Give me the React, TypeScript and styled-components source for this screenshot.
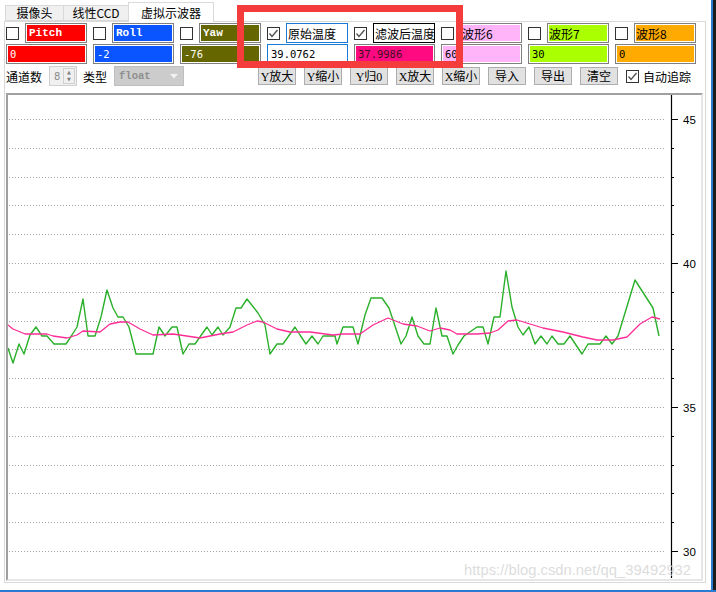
import React from 'react';
import styled, { createGlobalStyle } from 'styled-components';

const GlobalStyle = createGlobalStyle`
  html, body {
    margin: 0;
    padding: 0;
    background: #fff;
  }
  body {
    font-family: 'Noto Sans CJK SC', 'Liberation Sans', sans-serif;
    color: #000;
  }
`;

type Channel = {
  label: string;
  value: string;
  checked?: boolean;
  labelBg: string;
  labelColor: string;
  labelBorder?: string;
  valueBg: string;
  valueColor: string;
  valueBorder?: string;
  latin?: boolean;
};

const channels: Channel[] = [
  { label: 'Pitch', value: '0', labelBg: '#ff0000', labelColor: '#fff', valueBg: '#ff0000', valueColor: '#fff', latin: true },
  { label: 'Roll', value: '-2', labelBg: '#0a55ff', labelColor: '#fff', valueBg: '#0a55ff', valueColor: '#fff', latin: true },
  { label: 'Yaw', value: '-76', labelBg: '#666600', labelColor: '#fff', valueBg: '#666600', valueColor: '#fff', latin: true },
  {
    label: '原始温度',
    value: '39.0762',
    checked: true,
    labelBg: '#fff',
    labelColor: '#000',
    labelBorder: '#1a7bd6',
    valueBg: '#fff',
    valueColor: '#000',
    valueBorder: '#1a7bd6',
  },
  {
    label: '滤波后温度',
    value: '37.9986',
    checked: true,
    labelBg: '#fff',
    labelColor: '#000',
    labelBorder: '#000',
    valueBg: '#ff0a80',
    valueColor: '#3a1020',
  },
  { label: '波形6', value: '60', labelBg: '#ffb4fa', labelColor: '#000', valueBg: '#ffb4fa', valueColor: '#000' },
  { label: '波形7', value: '30', labelBg: '#aaff00', labelColor: '#000', valueBg: '#aaff00', valueColor: '#000' },
  { label: '波形8', value: '0', labelBg: '#ffaa00', labelColor: '#000', valueBg: '#ffaa00', valueColor: '#000' },
];

const buttons = ['Y放大', 'Y缩小', 'Y归0', 'X放大', 'X缩小', '导入', '导出', '清空'];

// screen coordinates traced from the capture
const rawPts = [
  [8, 348], [13, 363], [19, 344], [24, 354], [30, 335], [36, 327], [42, 336], [47, 336], [54, 344], [66, 344],
  [72, 335], [77, 327], [83, 299], [88, 336], [95, 336], [101, 317], [107, 290], [113, 308], [118, 317], [123, 317],
  [129, 327], [136, 354], [153, 354], [159, 327], [165, 336], [172, 327], [177, 327], [183, 354], [189, 344], [195, 344],
  [207, 327], [212, 335], [218, 327], [223, 335], [230, 327], [236, 308], [241, 308], [247, 299], [258, 313], [265, 325],
  [270, 354], [277, 344], [283, 344], [295, 327], [300, 335], [306, 344], [312, 336], [318, 344], [323, 336], [335, 336],
  [337, 344], [343, 327], [353, 327], [358, 344], [365, 315], [371, 298], [382, 298], [389, 308], [401, 344], [406, 336],
  [412, 317], [418, 336], [424, 344], [430, 344], [436, 308], [442, 336], [447, 336], [453, 354], [458, 345], [464, 336],
  [477, 327], [483, 327], [488, 344], [494, 317], [500, 317], [506, 271], [512, 307], [518, 327], [523, 335], [529, 327],
  [535, 344], [541, 336], [547, 344], [552, 336], [558, 344], [564, 344], [570, 336], [582, 354], [588, 344], [600, 344],
  [606, 336], [612, 344], [618, 336], [635, 280], [653, 308], [659, 336],
];

const filteredPts = [
  [8, 325], [13, 329], [18, 331], [25, 334], [47, 334], [53, 336], [67, 338], [77, 335], [83, 331], [100, 332],
  [110, 324], [120, 322], [128, 322], [140, 329], [153, 335], [173, 334], [180, 335], [200, 338], [220, 334], [233, 332],
  [247, 325], [257, 321], [263, 322], [277, 329], [290, 332], [310, 332], [333, 335], [343, 334], [360, 334], [373, 325],
  [388, 318], [403, 324], [417, 326], [430, 331], [440, 328], [450, 330], [457, 334], [477, 334], [490, 333], [498, 330],
  [508, 321], [517, 320], [530, 324], [543, 328], [563, 332], [583, 337], [597, 340], [613, 340], [627, 337], [640, 324],
  [652, 317], [660, 319],
];

const toPoints = (pts: number[][]) => pts.map(p => p.join(',')).join(' ');

const Screen = styled.div`
  position: relative;
  width: 716px;
  height: 592px;
  display: flex;
  flex-direction: column;
  overflow: hidden;
  background: #fff;
`;

const Top = styled.div`
  height: 590px;
  display: flex;
`;

const BottomEdge = styled.div`
  height: 2px;
  background: #2b7bd3;
`;

const RightEdge = styled.div`
  flex: 1;
  background: linear-gradient(to right, #fff 0 5px, #2b7bd3 5px 7px, #1b1b1b 7px);
`;

const Window = styled.div`
  width: 706px;
  padding: 2px 0 0 4px;
  box-sizing: border-box;
  display: flex;
  flex-direction: column;
`;

const TabBar = styled.div`
  height: 19px;
  display: flex;
  align-items: flex-end;
  padding-left: 1px;
  position: relative;
  z-index: 1;
`;

const Tab = styled.div<{ $active?: boolean; $w: number }>`
  width: ${p => p.$w}px;
  height: ${p => (p.$active ? 20 : 16)}px;
  margin-left: -1px;
  margin-bottom: ${p => (p.$active ? -1 : 0)}px;
  box-sizing: border-box;
  border: 1px solid #d9d9d9;
  border-bottom: ${p => (p.$active ? 'none' : '1px solid #d9d9d9')};
  background: ${p => (p.$active ? '#fff' : '#f0f0f0')};
  display: flex;
  align-items: center;
  justify-content: center;
  font-size: 12px;
  line-height: 12px;
  padding-top: ${p => (p.$active ? 1 : 0)}px;
  &:first-child {
    margin-left: 0;
  }
`;

const Panel = styled.div`
  width: 702px;
  height: 562px;
  box-sizing: border-box;
  border: 1px solid #d9d9d9;
  padding: 1px 0 0 1px;
  display: flex;
  flex-direction: column;
`;

const ChannelRow = styled.div`
  display: flex;
  gap: 6px;
`;

const ChannelBox = styled.div`
  width: 81px;
  display: grid;
  grid-template-columns: 13px 1fr;
  grid-template-rows: 20px 20px;
  column-gap: 6px;
  row-gap: 1px;
  align-items: center;
`;

const CheckBox = styled.div`
  width: 13px;
  height: 13px;
  box-sizing: border-box;
  border: 1px solid #333;
  background: #fff;
  display: flex;
  align-items: center;
  justify-content: center;
`;

const ColorField = styled.div<{ $bg: string; $color: string; $border?: string; $latin?: boolean }>`
  height: 20px;
  box-sizing: border-box;
  border: 1px solid ${p => p.$border || '#7f7f7f'};
  box-shadow: ${p => (p.$border ? 'none' : 'inset 0 0 0 1px #fff')};
  background: ${p => p.$bg};
  color: ${p => p.$color};
  display: flex;
  align-items: center;
  padding-left: ${p => (p.$latin ? 3 : 1)}px;
  overflow: hidden;
  white-space: nowrap;
  font-family: ${p =>
    p.$latin ? "'Liberation Mono', monospace" : "'Noto Sans CJK SC', 'Liberation Sans', sans-serif"};
  font-weight: ${p => (p.$latin ? 700 : 400)};
  font-size: ${p => (p.$latin ? 11 : 12)}px;
`;

const ValueField = styled(ColorField)`
  grid-column: 1 / span 2;
  padding-left: 3px;
  font-family: 'DejaVu Sans Mono', monospace;
  font-weight: 400;
  font-size: 10.5px;
`;

const Toolbar = styled.div`
  margin-top: 2px;
  height: 20px;
  display: flex;
  align-items: center;
  font-size: 12px;
`;

const ToolLabel = styled.span<{ $gap?: number }>`
  margin-left: ${p => p.$gap || 0}px;
  margin-right: 7px;
  white-space: nowrap;
`;

const Spin = styled.div`
  width: 28px;
  height: 20px;
  box-sizing: border-box;
  border: 1px solid #d0d0d0;
  background: #f0f0f0;
  display: flex;
  align-items: center;
  justify-content: space-between;
  padding: 0 1px 0 4px;
  color: #8a8a8a;
  font-family: 'DejaVu Sans', sans-serif;
  font-size: 10px;
`;

const SpinArrows = styled.div`
  width: 12px;
  height: 16px;
  box-sizing: border-box;
  border: 1px solid #d0d0d0;
  display: flex;
  flex-direction: column;
  align-items: center;
  justify-content: space-around;
  font-size: 5px;
  line-height: 5px;
  color: #808080;
`;

const Select = styled.div`
  width: 70px;
  height: 20px;
  box-sizing: border-box;
  border: 1px solid #bfbfbf;
  background: #cccccc;
  display: flex;
  align-items: center;
  justify-content: space-between;
  padding: 0 5px 0 4px;
  color: #8e8e8e;
  font-family: 'Liberation Mono', monospace;
  font-weight: 700;
  font-size: 10.5px;
`;

const ButtonGroup = styled.div`
  margin-left: 74px;
  display: flex;
  gap: 8px;
  align-items: center;
`;

const Button = styled.div`
  width: 38px;
  height: 18px;
  box-sizing: border-box;
  border: 1px solid #adadad;
  background: #e1e1e1;
  display: flex;
  align-items: center;
  justify-content: center;
  font-family: 'Liberation Serif', 'Noto Sans CJK SC', serif;
  font-size: 12px;
  white-space: nowrap;
`;

const AutoTrack = styled.label`
  margin-left: 8px;
  display: flex;
  align-items: center;
  gap: 4px;
  white-space: nowrap;
`;

const ChartFrame = styled.div`
  margin-top: 7px;
  width: 697px;
  height: 488px;
  box-sizing: border-box;
  border-left: 2px solid #a0a0a0;
  border-top: 2px solid #a0a0a0;
  border-right: 2px solid #e6e6e6;
  border-bottom: 2px solid #e6e6e6;
  background: #fff;
  svg {
    display: block;
  }
`;

const Highlight = styled.div`
  position: absolute;
  left: 237px;
  top: 5px;
  width: 226px;
  height: 63px;
  box-sizing: border-box;
  border: 7px solid #f53c3c;
  pointer-events: none;
`;

const Watermark = styled.div`
  position: absolute;
  left: 464px;
  top: 562px;
  font-family: 'Liberation Sans', sans-serif;
  font-size: 14.8px;
  color: rgba(190, 190, 190, 0.55);
  text-shadow: 1px 1px 0 rgba(255, 255, 255, 0.6);
  white-space: nowrap;
  pointer-events: none;
`;

const Check: React.FC<{ checked?: boolean }> = ({ checked }) => (
  <CheckBox>
    {checked ? (
      <svg width="11" height="11" viewBox="0 0 11 11">
        <polyline points="1.5,5.5 4,8.5 9.5,2" fill="none" stroke="#4d4d4d" strokeWidth="1.3" />
      </svg>
    ) : null}
  </CheckBox>
);

const Chart: React.FC = () => {
  const grid: number[] = [];
  for (let i = 0; i <= 15; i++) grid.push(119 + i * 28.8);
  return (
    <svg width={693} height={484} viewBox="8 95 693 484">
      {grid.map((y, i) => (
        <g key={i}>
          <line
            x1={9}
            x2={664}
            y1={Math.round(y) + 0.5}
            y2={Math.round(y) + 0.5}
            stroke="#a3a3a3"
            strokeWidth={1}
            strokeDasharray="1 2"
          />
          <line
            x1={671}
            x2={i % 5 === 0 ? 678 : 674}
            y1={Math.round(y) + 0.5}
            y2={Math.round(y) + 0.5}
            stroke="#000"
            strokeWidth={1}
          />
          {i % 5 === 0 ? (
            <text
              x={683}
              y={Math.round(y) + 4.5}
              fontFamily="'Liberation Sans', sans-serif"
              fontSize="11.5"
              fill="#000"
            >
              {45 - i}
            </text>
          ) : null}
        </g>
      ))}
      <line x1={671.5} x2={671.5} y1={95} y2={578} stroke="#000" strokeWidth={1.2} />
      <polyline points={toPoints(rawPts)} fill="none" stroke="#2ab02a" strokeWidth={1.4} strokeLinejoin="round" />
      <polyline
        points={toPoints(filteredPts)}
        fill="none"
        stroke="#ff2d96"
        strokeWidth={1.3}
        strokeLinejoin="round"
      />
    </svg>
  );
};

export default function App() {
  return (
    <>
      <GlobalStyle />
      <Screen>
        <Top>
          <Window>
            <TabBar>
              <Tab $w={59}>摄像头</Tab>
              <Tab $w={66}>线性CCD</Tab>
              <Tab $w={86} $active>
                虚拟示波器
              </Tab>
            </TabBar>
            <Panel>
              <ChannelRow>
                {channels.map(c => (
                  <ChannelBox key={c.label}>
                    <Check checked={c.checked} />
                    <ColorField $bg={c.labelBg} $color={c.labelColor} $border={c.labelBorder} $latin={c.latin}>
                      {c.label}
                    </ColorField>
                    <ValueField $bg={c.valueBg} $color={c.valueColor} $border={c.valueBorder}>
                      {c.value}
                    </ValueField>
                  </ChannelBox>
                ))}
              </ChannelRow>
              <Toolbar>
                <ToolLabel>通道数</ToolLabel>
                <Spin>
                  8
                  <SpinArrows>
                    <span>▲</span>
                    <span>▼</span>
                  </SpinArrows>
                </Spin>
                <ToolLabel $gap={6}>类型</ToolLabel>
                <Select>
                  float
                  <svg width="8" height="5" viewBox="0 0 8 5">
                    <polygon points="0,0 8,0 4,4.5" fill="#f2f2f2" />
                  </svg>
                </Select>
                <ButtonGroup>
                  {buttons.map(b => (
                    <Button key={b}>{b}</Button>
                  ))}
                </ButtonGroup>
                <AutoTrack>
                  <Check checked />
                  自动追踪
                </AutoTrack>
              </Toolbar>
              <ChartFrame>
                <Chart />
              </ChartFrame>
            </Panel>
          </Window>
          <RightEdge />
        </Top>
        <BottomEdge />
        <Highlight />
        <Watermark>https://blog.csdn.net/qq_39492932</Watermark>
      </Screen>
    </>
  );
}
